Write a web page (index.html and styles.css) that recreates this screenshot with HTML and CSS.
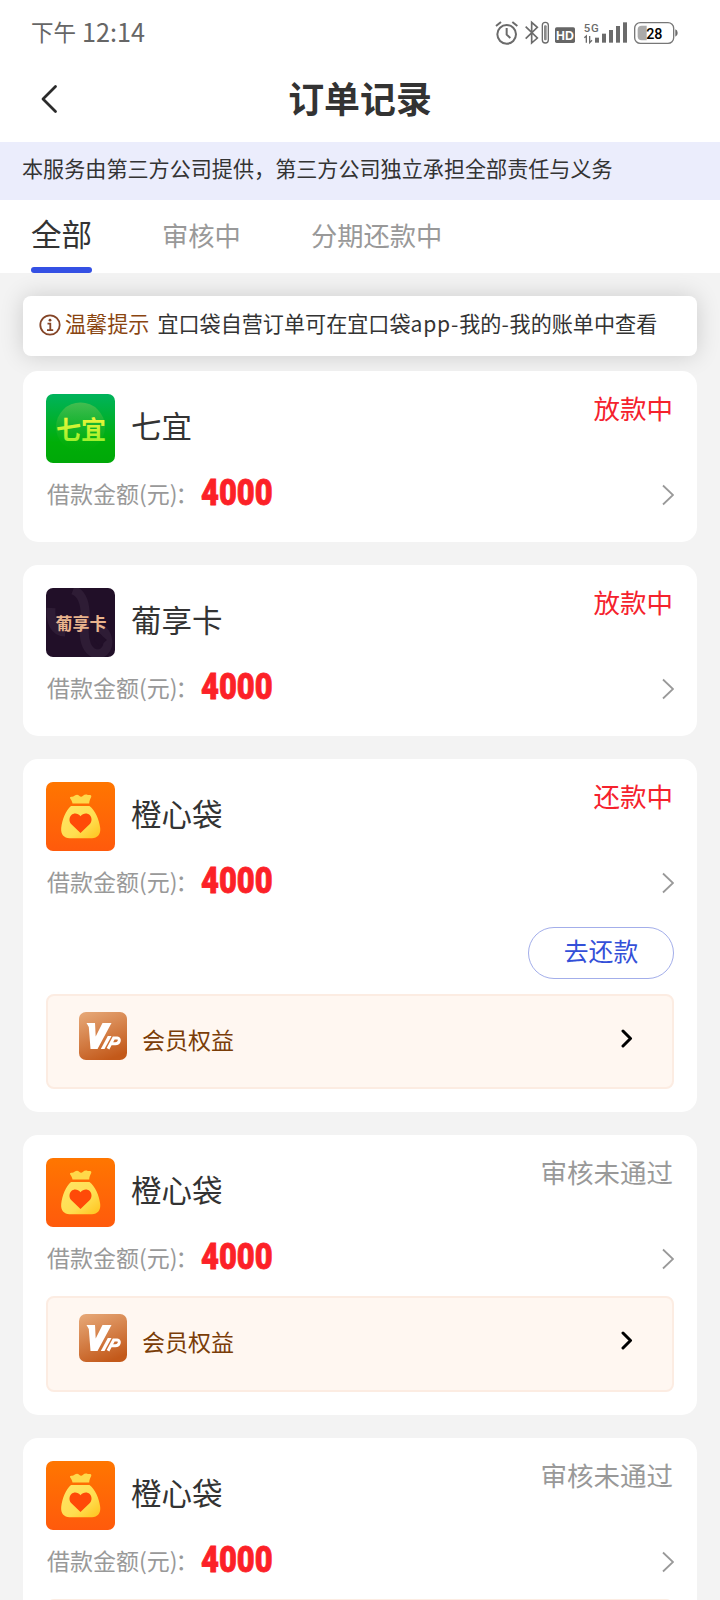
FILE: index.html
```html
<!DOCTYPE html>
<html lang="zh-CN">
<head>
    <meta charset="UTF-8">
    <meta name="viewport" content="width=device-width, initial-scale=1.0">
    <title>订单记录</title>
    <link rel="stylesheet" href="styles.css">
</head>
<body>
    <!-- shared icons -->
    <svg class="defs" width="0" height="0">
        <defs>
            <linearGradient id="bagBg" x1="0" y1="0" x2="0" y2="1">
                <stop offset="0" stop-color="#ff7600"/>
                <stop offset="1" stop-color="#ff5a0c"/>
            </linearGradient>
            <linearGradient id="bagFill" x1="0" y1="0" x2="1" y2="1">
                <stop offset="0" stop-color="#ffe566"/>
                <stop offset="0.6" stop-color="#ffde50"/>
                <stop offset="1" stop-color="#ffc21c"/>
            </linearGradient>
            <linearGradient id="vipBg" x1="0.2" y1="0" x2="0.6" y2="1">
                <stop offset="0" stop-color="#e5a574"/>
                <stop offset="1" stop-color="#c3591a"/>
            </linearGradient>
            <linearGradient id="greenBg" x1="0" y1="0" x2="0" y2="1">
                <stop offset="0" stop-color="#00b35c"/>
                <stop offset="0.7" stop-color="#00ae08"/>
                <stop offset="1" stop-color="#00a808"/>
            </linearGradient>
            <linearGradient id="greenBall" x1="0" y1="0" x2="0" y2="1">
                <stop offset="0" stop-color="#43bd50"/>
                <stop offset="1" stop-color="#12b012" stop-opacity="0"/>
            </linearGradient>
            <linearGradient id="greenText" x1="0" y1="0" x2="0" y2="1">
                <stop offset="0.2" stop-color="#f2f53a"/>
                <stop offset="1" stop-color="#8df02a"/>
            </linearGradient>
        </defs>
        <symbol id="bag" viewBox="0 0 69 69">
            <rect width="69" height="69" rx="7" fill="url(#bagBg)"/>
            <path d="M26.500 21.500C26.200 19.500 25.500 18 24.200 16.400C23.500 15.400 24.500 14.500 25.500 14.700C27.200 15 28 14.200 29.200 13.300C30.700 12.200 32.200 12.700 33.200 13.800C34.500 15.200 35.700 15.200 37 13.800C38.300 12.400 40 12.200 41.800 12.900C43 13.200 44.200 12.800 44.800 13.300C45.600 14 45.300 14.800 45 15.600C44.200 17.500 43.200 19 43.200 21.500Z" fill="#ffd84a"/>
            <path d="M25 24H43.500C49 28.500 53.200 37 54.200 46C54.900 52 51.500 56.300 46 56.300H23.500C18 56.300 14.600 52 15.200 46C16.200 37 20 28.500 25 24Z" fill="url(#bagFill)"/>
            <path d="M34.500 51L25.400 42.300C22.700 39.500 23 35.200 25.400 33C28 30.600 32 31 34.500 34.300C37 31 41.200 30.600 43.700 33C46 35.200 46.300 39.500 43.600 42.300Z" fill="#ff4a08"/>
        </symbol>
        <symbol id="vip" viewBox="0 0 48 48">
            <rect width="48" height="48" rx="7" fill="url(#vipBg)"/>
            <path d="M7.500 11H16L16.700 24.500L23.500 11H32.500L18.500 37H11.500L9.800 15Z" fill="#fff"/>
            <path d="M28.800 24H32.500L25.500 37H21.800Z" fill="#fff"/>
            <path d="M29 36.800L34.700 26H38.400C41.400 26 41 31.700 36.300 31.700H32" fill="none" stroke="#fff" stroke-width="3"/>
        </symbol>
        <symbol id="arrow" viewBox="0 0 14 22">
            <path d="M3 1.500L13 11L3 20.500" fill="none" stroke="#999" stroke-width="1.800"/>
        </symbol>
        <symbol id="arrowBold" viewBox="0 0 12 20">
            <path d="M2 2L9.500 9.500L2 17" fill="none" stroke="#000" stroke-width="3" stroke-linecap="round" stroke-linejoin="round"/>
        </symbol>
    </svg>

    <div class="status-bar">
        <div class="time">下午 <span class="clock">12:14</span></div>
        <svg class="status-icons" viewBox="0 0 720 150">
            <g fill="none" stroke="#6b6b6b" stroke-width="6">
                <circle cx="80" cy="73" r="28"/>
                <path d="M80 54V74L91 84M48 48L63 36M97 36L112 48"/>
                <path d="M137 50L172 84L155 99V37L172 52L137 86" stroke-width="5"/>
                <rect x="187" y="37" width="18" height="62" rx="9" stroke-width="4"/>
            </g>
            <rect x="192" y="46" width="8" height="45" rx="3" fill="#8a8a8a"/>
            <rect x="225" y="52" width="60" height="47" rx="5" fill="#666"/>
            <text x="255" y="89" class="hd">HD</text>
            <text x="311" y="66" class="net">5G</text>
            <path d="M313 83L319 78V98M329 78V98L336 91" fill="none" stroke="#6b6b6b" stroke-width="4"/>
            <g fill="#6b6b6b">
                <rect x="345" y="83" width="12" height="15"/>
                <rect x="366" y="71" width="12" height="27"/>
                <rect x="387" y="60" width="12" height="38"/>
                <rect x="408" y="48" width="12" height="50"/>
                <rect x="429" y="37" width="12" height="61"/>
                <path d="M586 58q7 2 7 11t-7 11z"/>
            </g>
            <rect x="464" y="38" width="117" height="62" rx="17" fill="#fff" stroke="#777" stroke-width="4"/>
            <path d="M500 47V91H485Q473 91 473 79V59Q473 47 485 47Z" fill="#aaa"/>
            <text x="523" y="86" class="battery">28</text>
        </svg>
    </div>

    <header class="nav">
        <svg class="back" viewBox="0 0 18 30"><path d="M15.500 2.500L3 15L15.500 27.500" fill="none" stroke="#2b2b2b" stroke-width="2.800" stroke-linecap="round" stroke-linejoin="round"/></svg>
        <h1>订单记录</h1>
    </header>

    <div class="notice">本服务由第三方公司提供，第三方公司独立承担全部责任与义务</div>

    <nav class="tabs">
        <a class="tab active">全部</a>
        <a class="tab">审核中</a>
        <a class="tab">分期还款中</a>
    </nav>

    <main class="content">
        <div class="tip">
            <svg class="info" viewBox="0 0 22 22">
                <circle cx="11" cy="11" r="9.700" fill="none" stroke="#844426" stroke-width="1.800"/>
                <circle cx="11" cy="6.200" r="1.400" fill="#844426"/>
                <path d="M8.500 9.600H11.300V16M8 16.200H14.200" fill="none" stroke="#844426" stroke-width="1.800"/>
            </svg>
            <span class="tip-title">温馨提示</span>
            <span class="tip-text">宜口袋自营订单可在宜口袋<span class="latin">app-</span>我的<span class="latin">-</span>我的账单中查看</span>
        </div>

        <div class="card">
            <div class="card-head">
                <svg class="logo" viewBox="0 0 69 69">
                    <rect width="69" height="69" rx="7" fill="url(#greenBg)"/>
                    <circle cx="34.500" cy="33" r="24.500" fill="url(#greenBall)"/>
                    <text x="35" y="44.500" class="logo-green">七宜</text>
                </svg>
                <span class="name">七宜</span>
                <span class="state red">放款中</span>
            </div>
            <div class="amount">
                <span class="label">借款金额(元)<span class="colon">：</span></span>
                <span class="num">4000</span>
                <svg class="arrow"><use href="#arrow"/></svg>
            </div>
        </div>

        <div class="card">
            <div class="card-head">
                <svg class="logo" viewBox="0 0 69 69">
                    <rect width="69" height="69" rx="7" fill="#210f28"/>
                    <path d="M27 2C38 6 40 20 39 34C36 54 42 66 53 66C66 63 64 43 52 40M5 20C4 34 9 44 19 44" fill="none" stroke="#2e1c35" stroke-width="9"/>
                    <path d="M47 52L54 46L61 52L54 58Z" fill="#210f28"/>
                    <text x="35" y="41.500" class="logo-dark">葡享卡</text>
                </svg>
                <span class="name">葡享卡</span>
                <span class="state red">放款中</span>
            </div>
            <div class="amount">
                <span class="label">借款金额(元)<span class="colon">：</span></span>
                <span class="num">4000</span>
                <svg class="arrow"><use href="#arrow"/></svg>
            </div>
        </div>

        <div class="card">
            <div class="card-head">
                <svg class="logo"><use href="#bag"/></svg>
                <span class="name">橙心袋</span>
                <span class="state red">还款中</span>
            </div>
            <div class="amount">
                <span class="label">借款金额(元)<span class="colon">：</span></span>
                <span class="num">4000</span>
                <svg class="arrow"><use href="#arrow"/></svg>
            </div>
            <div class="actions">
                <button class="repay">去还款</button>
            </div>
            <div class="benefit">
                <svg class="vip"><use href="#vip"/></svg>
                <span class="benefit-text">会员权益</span>
                <svg class="arrow-bold"><use href="#arrowBold"/></svg>
            </div>
        </div>

        <div class="card">
            <div class="card-head">
                <svg class="logo"><use href="#bag"/></svg>
                <span class="name">橙心袋</span>
                <span class="state">审核未通过</span>
            </div>
            <div class="amount">
                <span class="label">借款金额(元)<span class="colon">：</span></span>
                <span class="num">4000</span>
                <svg class="arrow"><use href="#arrow"/></svg>
            </div>
            <div class="benefit">
                <svg class="vip"><use href="#vip"/></svg>
                <span class="benefit-text">会员权益</span>
                <svg class="arrow-bold"><use href="#arrowBold"/></svg>
            </div>
        </div>

        <div class="card">
            <div class="card-head">
                <svg class="logo"><use href="#bag"/></svg>
                <span class="name">橙心袋</span>
                <span class="state">审核未通过</span>
            </div>
            <div class="amount">
                <span class="label">借款金额(元)<span class="colon">：</span></span>
                <span class="num">4000</span>
                <svg class="arrow"><use href="#arrow"/></svg>
            </div>
            <div class="benefit"></div>
        </div>
    </main>
</body>
</html>
```
FILE: styles.css
```css
* {
    box-sizing: border-box;
}

body {
    margin: 0;
    height: 1600px;
    overflow: hidden;
    display: flex;
    flex-direction: column;
    background-color: #f3f3f3;
    color: #333;
    font-family: "Noto Sans CJK SC", sans-serif;
}

svg {
    display: block;
    flex-shrink: 0;
}

.defs {
    position: absolute;
}

.status-bar {
    display: flex;
    justify-content: space-between;
    height: 64px;
    flex-shrink: 0;
    padding-left: 31px;
    background: #fff;
}

.time {
    display: flex;
    align-items: center;
    gap: 6px;
    height: 62px;
    font-size: 22.5px;
    color: #666;
}

.clock {
    font-size: 25.2px;
    line-height: 30px;
}

.status-icons {
    width: 240px;
    height: 50px;
    margin-top: 10px;
}

.hd {
    font: bold 37px "Liberation Sans", sans-serif;
    fill: #fff;
    text-anchor: middle;
}

.net {
    font: 500 34px Roboto, sans-serif;
    fill: #6b6b6b;
    letter-spacing: 3px;
}

.battery {
    font: 500 43px Roboto, sans-serif;
    fill: #000;
    text-anchor: middle;
}

.nav {
    display: grid;
    grid-template-columns: 100px 1fr 100px;
    align-items: center;
    height: 78px;
    flex-shrink: 0;
    padding-bottom: 9px;
    background: #fff;
}

.back {
    width: 18px;
    height: 30px;
    margin-left: 40px;
}

.nav h1 {
    margin: 0;
    padding-bottom: 4px;
    font-size: 35.9px;
    font-weight: 700;
    line-height: 50px;
    text-align: center;
}

.notice {
    height: 58px;
    flex-shrink: 0;
    padding-left: 22px;
    background: #ebedfc;
    font-size: 21.1px;
    line-height: 52px;
}

.tabs {
    display: flex;
    gap: 70px;
    height: 73px;
    flex-shrink: 0;
    padding-left: 31px;
    background: #fff;
}

.tab {
    display: flex;
    flex-direction: column;
    justify-content: space-between;
    font-size: 26.3px;
    line-height: 69px;
    color: #999;
}

.tab.active {
    font-size: 30.5px;
    line-height: 66px;
    color: #333;
}

.tab.active::after {
    content: "";
    height: 6px;
    border-radius: 3px;
    background: #3450e4;
}

.content {
    padding: 23px 23px 0;
}

.tip {
    display: flex;
    align-items: center;
    height: 60px;
    margin-bottom: 15px;
    padding: 0 0 3px 15px;
    border-radius: 8px;
    background: #fff;
    box-shadow: 0 0 23px rgba(0, 0, 0, 0.16);
    font-size: 21.1px;
    line-height: 30px;
    white-space: nowrap;
}

.info {
    width: 22px;
    height: 22px;
    margin: 0 4px 0 1px;
}

.tip-title,
.tip-text {
    padding-bottom: 3px;
}

.tip-title {
    margin-right: 8px;
    color: #8a4510;
}

.latin {
    letter-spacing: 0.8px;
}

.card {
    margin-bottom: 23px;
    padding: 23px;
    border-radius: 15px;
    background: #fff;
}

.card-head {
    display: flex;
    height: 69px;
}

.logo {
    width: 69px;
    height: 69px;
}

.logo-green {
    font: 700 25px "Noto Sans CJK SC", sans-serif;
    fill: url(#greenText);
    text-anchor: middle;
}

.logo-dark {
    font: 700 17px "Noto Sans CJK SC", sans-serif;
    fill: #e8b38d;
    text-anchor: middle;
}

.name {
    flex: 1;
    margin-left: 16px;
    font-size: 30.5px;
    line-height: 63px;
}

.state {
    margin-right: 1px;
    font-size: 26.5px;
    line-height: 28px;
    color: #999;
}

.state.red {
    color: #f5222d;
}

.amount {
    display: flex;
    align-items: center;
    height: 56px;
    padding-top: 4px;
}

.label {
    width: 155px;
    padding-left: 1px;
    font-size: 23px;
    color: #999;
    white-space: nowrap;
}

.colon {
    margin-left: -2px;
}

.num {
    flex: 1;
    font-family: Roboto, sans-serif;
    font-size: 37px;
    font-weight: 900;
    line-height: 40px;
    color: #fc2127;
    -webkit-text-stroke: 0.8px #fc2127;
    transform: scaleX(0.835);
    transform-origin: left;
}

.arrow {
    width: 14px;
    height: 22px;
    margin-top: 4px;
}

.actions {
    display: flex;
    justify-content: flex-end;
    padding: 20px 0 2px;
}

.repay {
    width: 146px;
    height: 52px;
    padding: 0 0 7px;
    border: 1px solid #a3aeea;
    border-radius: 26px;
    background: #fff;
    color: #3450d8;
    font-family: inherit;
    font-size: 24.8px;
}

.benefit {
    display: flex;
    height: 95.3px;
    margin-top: 13px;
    padding: 16px 39px 0 31px;
    border: 2px solid #fcece2;
    border-radius: 8px;
    background: #fff7f1;
}

.vip {
    width: 48px;
    height: 48px;
}

.benefit-text {
    flex: 1;
    margin-left: 15px;
    font-size: 23px;
    line-height: 54px;
    color: #7a3d08;
}

.arrow-bold {
    width: 12px;
    height: 20px;
    margin-top: 17px;
}
```
